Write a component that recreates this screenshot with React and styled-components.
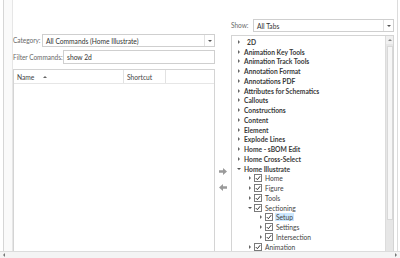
import React from "react";
import styled, { createGlobalStyle } from "styled-components";

const Global = createGlobalStyle`
  html, body { margin: 0; padding: 0; background: #fff; }
  body { font-family: "Lato", "Open Sans", sans-serif; }
  * { box-sizing: border-box; }
`;

const Window = styled.div`
  width: 400px;
  height: 258px;
  display: flex;
  flex-direction: column;
  overflow: hidden;
  background: #fff;
  color: #333;
  font-size: 6.7px;
`;

const Main = styled.div`
  flex: 1;
  display: flex;
  min-height: 0;
`;

const LeftEdge = styled.div`
  width: 13px;
  border-left: 3px solid #fff;
  background: #fafafa;
  box-shadow: inset 1px 0 0 #d6d6d6, inset -1px 0 0 #e6e6e6;
`;

const LeftPanel = styled.div`
  width: 202px;
  display: flex;
  flex-direction: column;
  padding-top: 34px;
`;

const FieldRow = styled.div`
  display: flex;
  align-items: center;
  height: ${(p) => p.$h}px;
  margin-bottom: ${(p) => p.$mb}px;
`;

const Label = styled.span`
  color: #6a6a6a;
  width: ${(p) => p.$w}px;
  flex: none;
  white-space: nowrap;
  font-size: 6.55px;
  letter-spacing: -0.05px;
`;

const Select = styled.div`
  flex: 1;
  height: 100%;
  border: 1px solid #cfcfcf;
  background: #fff;
  display: flex;
  align-items: center;
  padding-left: 3px;
  color: #333;
`;

const SelectArrow = styled.div`
  margin-left: auto;
  width: 10px;
  height: 100%;
  border-left: 1px solid #e2e2e2;
  display: flex;
  align-items: center;
  justify-content: center;
  &::after {
    content: "";
    border-left: 2px solid transparent;
    border-right: 2px solid transparent;
    border-top: 2px solid #555;
  }
`;

const Input = styled.div`
  flex: 1;
  height: 100%;
  border: 1px solid #cfcfcf;
  display: flex;
  align-items: center;
  padding-left: 3px;
  color: #333;
`;

const List = styled.div`
  flex: 1;
  border: 1px solid #d4d4d4;
  border-bottom: none;
  display: flex;
  flex-direction: column;
`;

const Header = styled.div`
  height: 14px;
  display: flex;
  background: #fff;
  border-bottom: 1px solid #e6e6e6;
`;

const HeadCell = styled.div`
  width: ${(p) => p.$w}px;
  flex: ${(p) => (p.$w ? "none" : 1)};
  display: flex;
  align-items: center;
  padding-left: 3px;
  border-right: ${(p) => (p.$last ? "none" : "1px solid #e2e2e2")};
  color: #444;
  gap: 9px;
`;

const SortUp = styled.span`
  width: 0;
  height: 0;
  border-left: 2px solid transparent;
  border-right: 2px solid transparent;
  border-bottom: 2px solid #666;
`;

const Middle = styled.div`
  width: 16px;
  display: flex;
  flex-direction: column;
  align-items: center;
  padding-top: 168px;
  gap: 9px;
`;

const RightPanel = styled.div`
  width: 163px;
  display: flex;
  flex-direction: column;
  padding-top: 19px;
`;

const Tree = styled.div`
  flex: 1;
  margin-top: 3px;
  border: 1px solid #d4d4d4;
  border-bottom: none;
  display: flex;
  min-height: 0;
`;

const TreeBody = styled.div`
  flex: 1;
  padding-top: 1px;
  overflow: hidden;
`;

const Row = styled.div`
  height: 9.75px;
  display: flex;
  align-items: center;
  padding-left: ${(p) => 3 + p.$level * 11}px;
  font-weight: ${(p) => (p.$level === 0 ? 700 : 400)};
  color: ${(p) => (p.$level === 0 ? "#3a3a3a" : "#444")};
  white-space: nowrap;
`;

const Caret = styled.span`
  width: 8px;
  flex: none;
  display: flex;
  justify-content: center;
  &::after {
    content: "";
    ${(p) =>
      p.$open
        ? `border-left: 2px solid transparent; border-right: 2px solid transparent; border-top: 2.5px solid #555;`
        : `border-top: 2px solid transparent; border-bottom: 2px solid transparent; border-left: 2.5px solid #666;`}
  }
`;

const Check = styled.span`
  width: 8px;
  height: 8px;
  flex: none;
  border: 1px solid #7a7a7a;
  background: #fff;
  margin-right: 2px;
  display: flex;
  align-items: center;
  justify-content: center;
`;

const Text = styled.span`
  padding: 0 1px 0 ${(p) => (p.$indent ? 4 : 1)}px;
  background: ${(p) => (p.$sel ? "#cce8ff" : "transparent")};
  line-height: 8px;
`;

const ScrollV = styled.div`
  width: 8px;
  background: #e6e6e6;
  border-left: 1px solid #dcdcdc;
  display: flex;
  flex-direction: column;
  align-items: center;
`;

const ScrollBtn = styled.div`
  height: 8px;
  width: 100%;
  display: flex;
  align-items: center;
  justify-content: center;
  background: #f0f0f0;
  &::after {
    content: "";
    border-left: 2px solid transparent;
    border-right: 2px solid transparent;
    border-bottom: 2px solid #888;
  }
`;

const Thumb = styled.div`
  width: 6px;
  height: 174px;
  margin-top: 2px;
  background: #f7f7f7;
  border: 1px solid #d8d8d8;
`;

const RightEdge = styled.div`
  width: 6px;
  border-left: 3px solid #fff;
  box-shadow: inset 1px 0 0 #dcdcdc;
`;

const BottomBar = styled.div`
  height: 7px;
  border-top: 1px solid #dcdcdc;
  background: #f4f4f4;
  display: flex;
  align-items: center;
  justify-content: space-between;
  padding: 0 3px;
`;

const HArrow = styled.span`
  border-top: 2px solid transparent;
  border-bottom: 2px solid transparent;
  ${(p) => (p.$dir === "left" ? "border-right: 2px solid #777;" : "border-left: 2px solid #777;")}
`;

const CheckMark = () => (
  <svg width="6" height="6" viewBox="0 0 6 6">
    <path d="M0.8 3.1 L2.4 4.7 L5.2 1.2" fill="none" stroke="#333" strokeWidth="1" />
  </svg>
);

const MoveArrow = ({ dir }) => (
  <svg width="8" height="7" viewBox="0 0 8 7">
    {dir === "right" ? (
      <path d="M0 2.2 H4 V0 L8 3.5 L4 7 V4.8 H0 Z" fill="#9a9a9a" />
    ) : (
      <path d="M8 2.2 H4 V0 L0 3.5 L4 7 V4.8 H8 Z" fill="#9a9a9a" />
    )}
  </svg>
);

const rows = [
  { t: "2D", l: 0, pad: true },
  { t: "Animation Key Tools", l: 0 },
  { t: "Animation Track Tools", l: 0 },
  { t: "Annotation Format", l: 0 },
  { t: "Annotations PDF", l: 0 },
  { t: "Attributes for Schematics", l: 0 },
  { t: "Callouts", l: 0 },
  { t: "Constructions", l: 0 },
  { t: "Content", l: 0 },
  { t: "Element", l: 0 },
  { t: "Explode Lines", l: 0 },
  { t: "Home - sBOM Edit", l: 0 },
  { t: "Home Cross-Select", l: 0 },
  { t: "Home Illustrate", l: 0, open: true },
  { t: "Home", l: 1 },
  { t: "Figure", l: 1 },
  { t: "Tools", l: 1 },
  { t: "Sectioning", l: 1, open: true },
  { t: "Setup", l: 2, sel: true },
  { t: "Settings", l: 2 },
  { t: "Intersection", l: 2 },
  { t: "Animation", l: 1 },
  { t: "Animation Selection", l: 1 },
];

export default function App() {
  return (
    <>
      <Global />
      <Window>
        <Main>
          <LeftEdge />
          <LeftPanel>
            <FieldRow $h={13} $mb={3}>
              <Label $w={29}>Category:</Label>
              <Select>
                All Commands (Home Illustrate)
                <SelectArrow />
              </Select>
            </FieldRow>
            <FieldRow $h={14} $mb={5}>
              <Label $w={50}>Filter Commands:</Label>
              <Input>show 2d</Input>
            </FieldRow>
            <List>
              <Header>
                <HeadCell $w={110}>
                  Name <SortUp />
                </HeadCell>
                <HeadCell $w={42}>Shortcut</HeadCell>
                <HeadCell $last />
              </Header>
            </List>
          </LeftPanel>
          <Middle>
            <MoveArrow dir="right" />
            <MoveArrow dir="left" />
          </Middle>
          <RightPanel>
            <FieldRow $h={13} $mb={0}>
              <Label $w={22}>Show:</Label>
              <Select>
                All Tabs
                <SelectArrow />
              </Select>
            </FieldRow>
            <Tree>
              <TreeBody>
                {rows.map((r, i) => (
                  <Row key={i} $level={r.l}>
                    <Caret $open={r.open} />
                    {r.l > 0 && (
                      <Check>
                        <CheckMark />
                      </Check>
                    )}
                    <Text $sel={r.sel} $indent={r.pad}>
                      {r.t}
                    </Text>
                  </Row>
                ))}
              </TreeBody>
              <ScrollV>
                <ScrollBtn />
                <Thumb />
              </ScrollV>
            </Tree>
          </RightPanel>
          <RightEdge />
        </Main>
        <BottomBar>
          <HArrow $dir="left" />
          <HArrow $dir="right" />
        </BottomBar>
      </Window>
    </>
  );
}
